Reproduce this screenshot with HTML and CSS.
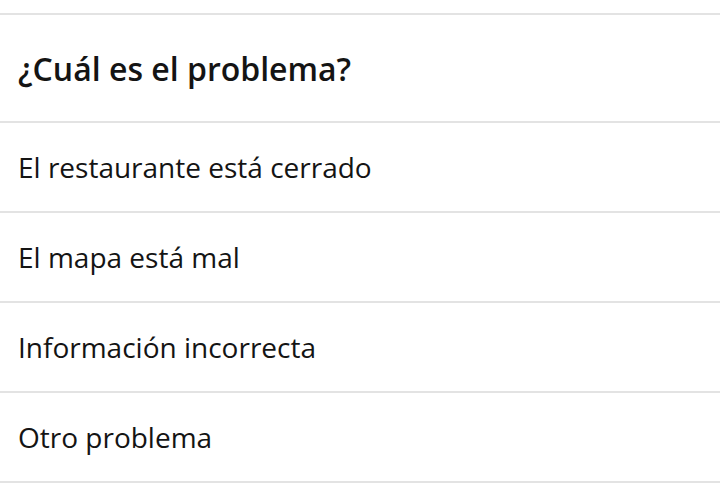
FILE: index.html
```html
<!DOCTYPE html>
<html lang="es">
<head>
<meta charset="utf-8">
<link rel="stylesheet" href="styles.css">
</head>
<body>
<div class="sheet">
  <div class="header"><h1 class="title">¿Cuál es el problema?</h1></div>
  <ul class="options">
    <li class="option">El restaurante está cerrado</li>
    <li class="option">El mapa está mal</li>
    <li class="option">Información incorrecta</li>
    <li class="option">Otro problema</li>
  </ul>
</div>
</body>
</html>
```
FILE: styles.css
```css
html, body {
  margin: 0;
  padding: 0;
  background: #fff;
}
body {
  font-family: "Open Sans", "Noto Sans", sans-serif;
  color: #141414;
  overflow: hidden;
}
.sheet {
  padding-top: 13px;
}
.header {
  border-top: 2px solid #e3e3e3;
  border-bottom: 2px solid #e3e3e3;
  height: 106px;
  display: flex;
  align-items: center;
  padding-left: 18px;
}
.title {
  margin: 0;
  font-size: 32px;
  font-weight: 600;
  letter-spacing: 0;
}
.options {
  list-style: none;
  margin: 0;
  padding: 0;
}
.option {
  height: 88px;
  border-bottom: 2px solid #e3e3e3;
  display: flex;
  align-items: center;
  padding-left: 18px;
  font-size: 28px;
}
```
